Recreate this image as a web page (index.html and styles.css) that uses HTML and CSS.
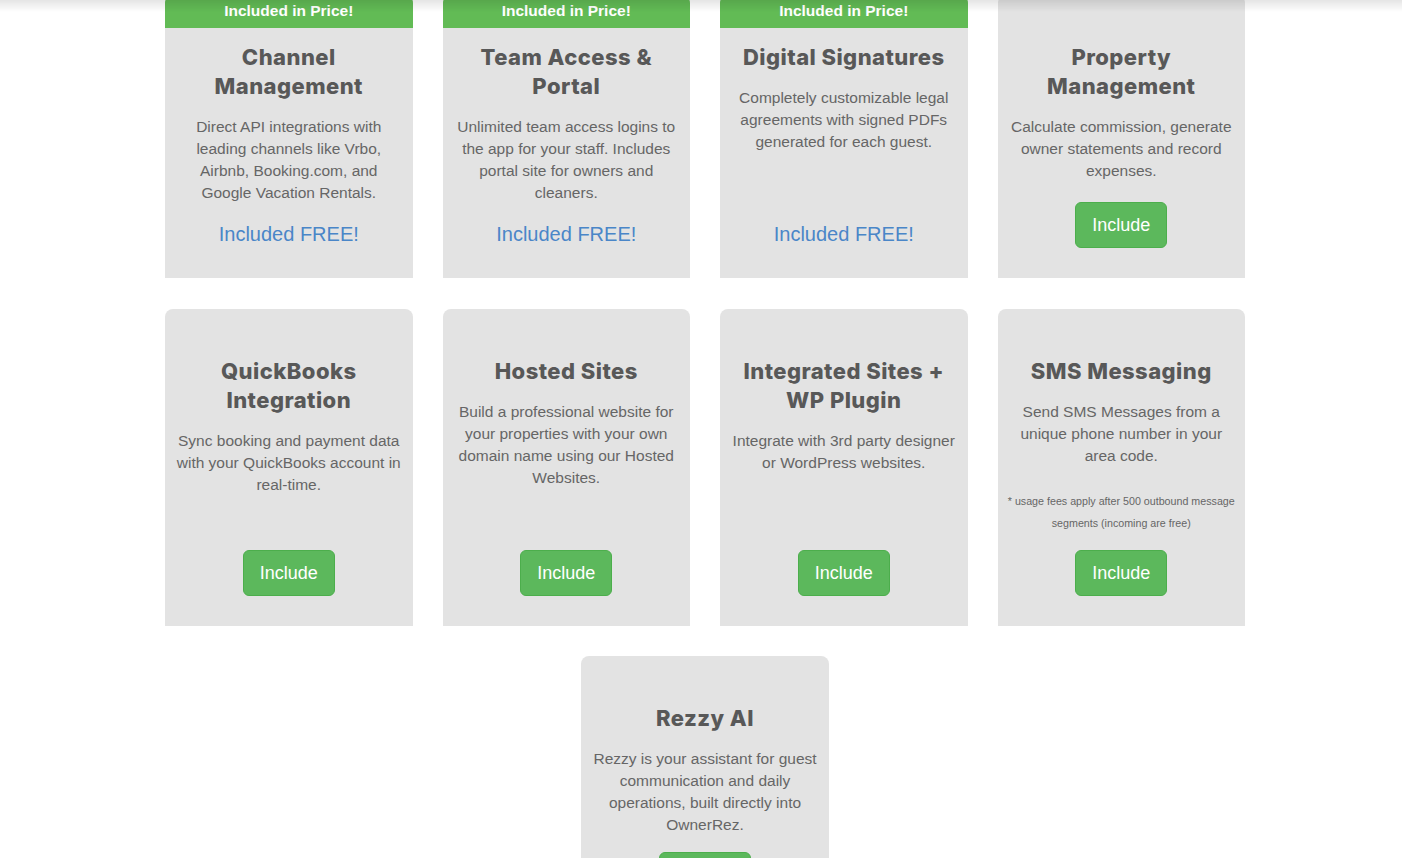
FILE: index.html
```html
<!DOCTYPE html>
<html lang="en">
<head>
<meta charset="utf-8">
<title>Add-ons</title>
<link rel="stylesheet" href="styles.css">
</head>
<body>
<div class="top-shadow"></div>
<main class="page">
  <section class="features">
    <article class="card">
      <div class="ribbon">Included in Price!</div>
      <h3 class="card-title">Channel Management</h3>
      <p class="card-text">Direct API integrations with leading channels like Vrbo, Airbnb, Booking.com, and Google Vacation Rentals.</p>
      <div class="card-footer"><span class="free">Included FREE!</span></div>
    </article>
    <article class="card">
      <div class="ribbon">Included in Price!</div>
      <h3 class="card-title">Team Access &amp; Portal</h3>
      <p class="card-text">Unlimited team access logins to the app for your staff. Includes portal site for owners and cleaners.</p>
      <div class="card-footer"><span class="free">Included FREE!</span></div>
    </article>
    <article class="card">
      <div class="ribbon">Included in Price!</div>
      <h3 class="card-title">Digital Signatures</h3>
      <p class="card-text">Completely customizable legal agreements with signed PDFs generated for each guest.</p>
      <div class="card-footer"><span class="free">Included FREE!</span></div>
    </article>
    <article class="card">
      <h3 class="card-title">Property Management</h3>
      <p class="card-text">Calculate commission, generate owner statements and record expenses.</p>
      <div class="card-footer"><button class="btn-include" type="button">Include</button></div>
    </article>

    <article class="card">
      <h3 class="card-title">QuickBooks Integration</h3>
      <p class="card-text">Sync booking and payment data with your QuickBooks account in real-time.</p>
      <div class="card-footer"><button class="btn-include" type="button">Include</button></div>
    </article>
    <article class="card">
      <h3 class="card-title">Hosted Sites</h3>
      <p class="card-text">Build a professional website for your properties with your own domain name using our Hosted Websites.</p>
      <div class="card-footer"><button class="btn-include" type="button">Include</button></div>
    </article>
    <article class="card">
      <h3 class="card-title">Integrated Sites + WP Plugin</h3>
      <p class="card-text">Integrate with 3rd party designer or WordPress websites.</p>
      <div class="card-footer"><button class="btn-include" type="button">Include</button></div>
    </article>
    <article class="card">
      <h3 class="card-title">SMS Messaging</h3>
      <p class="card-text">Send SMS Messages from a unique phone number in your area code.</p>
      <p class="footnote">* usage fees apply after 500 outbound message segments (incoming are free)</p>
      <div class="card-footer"><button class="btn-include" type="button">Include</button></div>
    </article>

    <article class="card">
      <h3 class="card-title">Rezzy AI</h3>
      <p class="card-text">Rezzy is your assistant for guest communication and daily operations, built directly into OwnerRez.</p>
      <div class="card-footer"><button class="btn-include" type="button">Include</button></div>
    </article>
  </section>
</main>
</body>
</html>
```

FILE: styles.css
```css
* {
  box-sizing: border-box;
}

html, body {
  margin: 0;
  padding: 0;
  background: #ffffff;
}

body {
  font-family: "Liberation Sans", Arial, sans-serif;
  color: #666666;
}

.top-shadow {
  position: fixed;
  top: 0;
  left: 0;
  right: 0;
  height: 12px;
  background: linear-gradient(to bottom, rgba(0, 0, 0, 0.1), rgba(0, 0, 0, 0));
  pointer-events: none;
  z-index: 10;
}

.page {
  width: 1088px;
  margin: -5px auto 0;
  padding-left: 8px;
  padding-bottom: 40px;
}

.features {
  display: flex;
  flex-wrap: wrap;
  justify-content: center;
  gap: 30.5px 30px;
}

.card {
  position: relative;
  overflow: hidden;
  width: 247.5px;
  display: flex;
  flex-direction: column;
  align-items: center;
  padding: 48px 10px 30px;
  background: #e3e3e3;
  border-radius: 8px 8px 0 0;
  text-align: center;
}

.ribbon {
  position: absolute;
  top: 0;
  left: 0;
  right: 0;
  height: 33px;
  padding-top: 7px;
  background: #62bb55;
  color: #ffffff;
  font-weight: 700;
  font-size: 15.5px;
  line-height: 18px;
}

.card-title {
  margin: 0;
  font-family: Inter, "Open Sans", sans-serif;
  font-weight: 800;
  font-size: 22px;
  line-height: 29px;
  letter-spacing: 0.45px;
  color: #585858;
}

.card-text {
  margin: 15px 0 0;
  font-size: 15.5px;
  line-height: 22px;
  color: #666666;
}

.footnote {
  margin: 23px -6px 0;
  font-size: 10.7px;
  line-height: 22px;
  color: #666666;
}

.card-footer {
  margin-top: auto;
  padding-top: 16px;
}

.free {
  display: block;
  font-size: 20px;
  line-height: 28px;
  color: #4a86c8;
}

.btn-include {
  display: inline-block;
  padding: 10px 16px;
  font-family: "Liberation Sans", Arial, sans-serif;
  font-size: 18px;
  line-height: 24px;
  color: #ffffff;
  background: #5cb85c;
  border: 1px solid #4cae4c;
  border-radius: 6px;
  cursor: pointer;
}
```
